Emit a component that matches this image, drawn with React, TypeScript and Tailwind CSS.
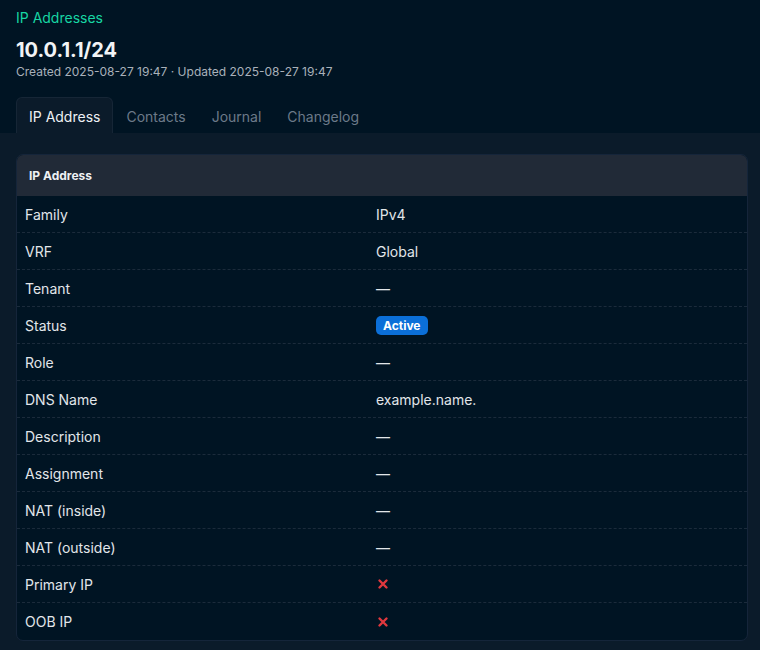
import React from "react";

const rows: { label: string; value: React.ReactNode }[] = [
  { label: "Family", value: "IPv4" },
  { label: "VRF", value: "Global" },
  { label: "Tenant", value: "—" },
  {
    label: "Status",
    value: (
      <span className="inline-flex items-center rounded-[5px] bg-[#0b6fd8] px-[7px] py-[2px] text-[12px] font-bold leading-[15px] text-white">
        Active
      </span>
    ),
  },
  { label: "Role", value: "—" },
  { label: "DNS Name", value: "example.name." },
  { label: "Description", value: "—" },
  { label: "Assignment", value: "—" },
  { label: "NAT (inside)", value: "—" },
  { label: "NAT (outside)", value: "—" },
  { label: "Primary IP", value: <XIcon /> },
  { label: "OOB IP", value: <XIcon /> },
];

function XIcon() {
  return (
    <svg width="12" height="12" viewBox="0 0 12 12" className="ml-[1px]">
      <path d="M2.5 2.5 L9.5 9.5 M9.5 2.5 L2.5 9.5" stroke="#e0383e" strokeWidth="2.4" strokeLinecap="round" />
    </svg>
  );
}

export default function App() {
  return (
    <div className="min-h-[650px] bg-[#001423] font-['Inter',sans-serif] text-[#e2e6ea]">
      <div className="px-4 pt-2">
        <div className="text-[14px] leading-5 text-[#17d6a3]">IP Addresses</div>
        <h1 className="mt-[8px] text-[20px] font-bold leading-7 text-[#f2f4f6]">10.0.1.1/24</h1>
        <div className="text-[12px] leading-4 text-[#a9b1ba]">
          Created 2025-08-27 19:47 · Updated 2025-08-27 19:47
        </div>
        <div className="mt-[17px] flex h-9 items-stretch text-[14px]">
          <div className="flex items-center rounded-t-[6px] border border-b-0 border-[#162636] bg-[#0b1b2a] px-3 pt-[2px] text-[#eef1f4]">
            IP Address
          </div>
          <div className="flex items-center px-[13px] pt-[2px] text-[#6c7a89]">Contacts</div>
          <div className="flex items-center px-[13px] pt-[2px] text-[#6c7a89]">Journal</div>
          <div className="flex items-center px-[13px] pt-[2px] text-[#6c7a89]">Changelog</div>
        </div>
      </div>
      <div className="bg-[#0b1b2a] pb-[10px] pl-4 pr-3 pt-[21px]">
        <div className="overflow-hidden rounded-[7px] border border-[#15253a] bg-[#001423]">
          <div className="flex h-[41px] items-center bg-[#212a37] px-3 text-[12px] font-bold text-[#eef1f4]">
            IP Address
          </div>
          {rows.map((r, i) => (
            <div
              key={r.label}
              className={`grid h-[37px] grid-cols-[351px_1fr] items-center px-2 text-[14px] ${
                i < rows.length - 1 ? "border-b border-dashed border-[#1b2b3b]" : ""
              }`}
            >
              <div>{r.label}</div>
              <div className="flex items-center">{r.value}</div>
            </div>
          ))}
        </div>
      </div>
    </div>
  );
}
